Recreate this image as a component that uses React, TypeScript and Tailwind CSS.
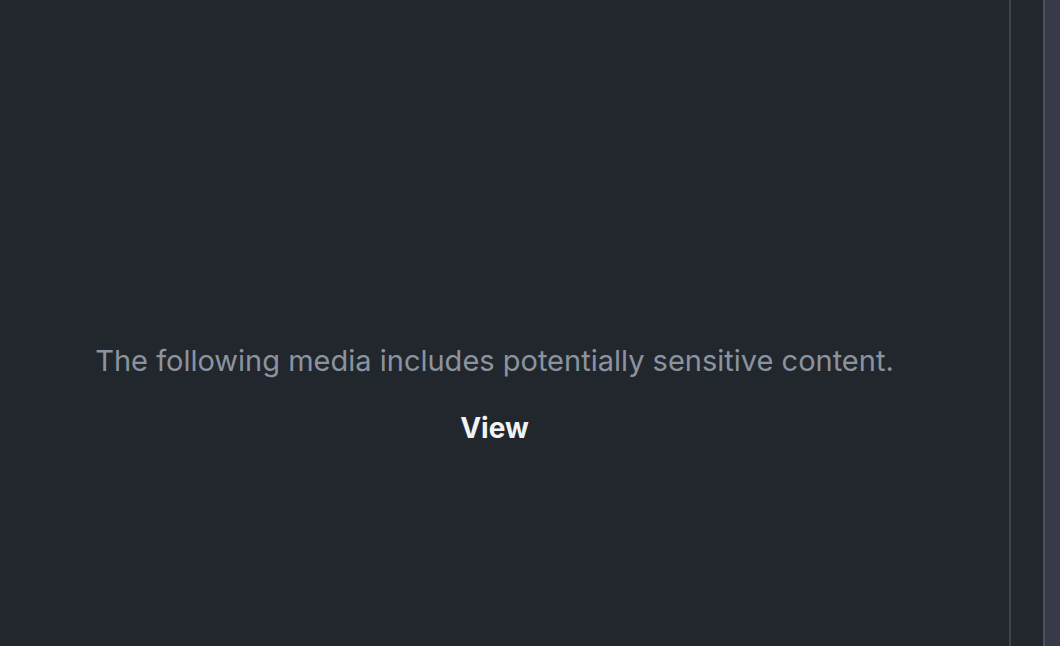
export default function App() {
  return (
    <div className="flex h-[646px] w-[1060px] overflow-hidden bg-[#22272e]" style={{ fontFamily: 'Inter, "Noto Sans", sans-serif' }}>
      <div className="flex w-[1009px] shrink-0 flex-col items-center pr-[20px] pt-[341px]">
        <p className="whitespace-nowrap text-[29px] leading-[40px] text-[#8b949e]">The following media includes potentially sensitive content.</p>
        <button className="mt-[27px] text-[28px] font-bold leading-[40px] text-[#f0f3f6]">View</button>
      </div>
      <div className="w-[2px] shrink-0 bg-[#3d4451]" />
      <div className="w-[32px] shrink-0" />
      <div className="w-[2px] shrink-0 bg-[#4a5262]" />
      <div className="flex-1 bg-[#393a47]" />
    </div>
  );
}
